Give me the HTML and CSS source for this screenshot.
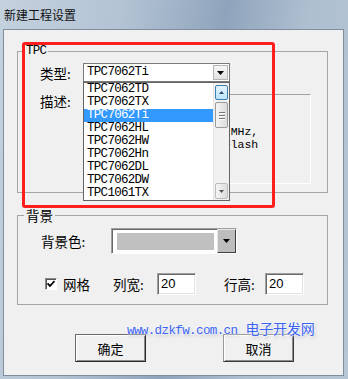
FILE: index.html
```html
<!DOCTYPE html>
<html lang="zh-CN">
<head>
    <meta charset="UTF-8">
    <meta name="viewport" content="width=device-width, initial-scale=1.0">
    <title>新建工程设置</title>
    <link rel="stylesheet" href="styles.css">
</head>
<body>
<div class="window">
    <div class="titlebar">新建工程设置</div>
    <div class="client">
        <fieldset class="group group-tpc">
            <legend class="mono">TPC</legend>
            <div class="row row-type">
                <span class="label">类型:</span>
                <div class="combo">
                    <span class="combo-text mono">TPC7062Ti</span>
                    <span class="combo-btn">
                        <svg width="7" height="4" viewBox="0 0 7 4"><path d="M0 0h7L3.5 4z" fill="#000"/></svg>
                    </span>
                    <div class="droplist">
                        <ul class="items mono">
                            <li>TPC7062TD</li>
                            <li>TPC7062TX</li>
                            <li class="selected">TPC7062Ti</li>
                            <li>TPC7062HL</li>
                            <li>TPC7062HW</li>
                            <li>TPC7062Hn</li>
                            <li>TPC7062DL</li>
                            <li>TPC7062DW</li>
                            <li>TPC1061TX</li>
                        </ul>
                        <div class="scrollbar">
                            <span class="sb-btn sb-up">
                                <svg width="5" height="3" viewBox="0 0 5 3"><path d="M0 3h5L2.5 0z" fill="#2c4a77"/></svg>
                            </span>
                            <span class="sb-thumb"><i></i><i></i><i></i></span>
                            <span class="sb-space"></span>
                            <span class="sb-btn sb-down">
                                <svg width="5" height="3" viewBox="0 0 5 3"><path d="M0 0h5L2.5 3z" fill="#555"/></svg>
                            </span>
                        </div>
                    </div>
                </div>
            </div>
            <div class="row row-desc">
                <span class="label">描述:</span>
                <div class="desc">
                    <div class="desc-line"></div>
                    <div class="desc-line"></div>
                    <div class="desc-line">&nbsp;MHz,</div>
                    <div class="desc-line">Flash</div>
                </div>
            </div>
        </fieldset>

        <fieldset class="group group-bg">
            <legend>背景</legend>
            <div class="row row-color">
                <span class="label label-color">背景色:</span>
                <div class="colorpick">
                    <span class="swatch"></span>
                    <span class="colorpick-btn">
                        <svg width="7" height="4" viewBox="0 0 7 4"><path d="M0 0h7L3.5 4z" fill="#000"/></svg>
                    </span>
                </div>
            </div>
            <div class="row row-grid">
                <span class="check">
                    <svg width="8" height="8" viewBox="0 0 8 8"><path d="M0.5 3.5L3 6L7.5 1" fill="none" stroke="#000" stroke-width="1.8"/></svg>
                </span>
                <span class="check-label">网格</span>
                <span class="label label-col">列宽:</span>
                <span class="edit">20</span>
                <span class="label label-rowh">行高:</span>
                <span class="edit">20</span>
            </div>
        </fieldset>

        <div class="buttons">
            <button class="btn btn-default">确定</button>
            <button class="btn">取消</button>
        </div>

        <div class="mark-box"></div>
        <div class="watermark"><span class="wm-url">www.dzkfw.com.cn</span> <span class="wm-name">电子开发网</span></div>
    </div>
</div>
</body>
</html>
```

FILE: styles.css
```css
* {
    box-sizing: border-box;
}
body {
    margin: 0;
    width: 348px;
    height: 379px;
    overflow: hidden;
    font-family: "Noto Sans CJK SC", sans-serif;
    font-size: 13.5px;
    color: #000;
    background: linear-gradient(100deg, #c4d1de 0%, #b3c3d4 30%, #8fa4bc 55%, #aebfd0 75%, #b7c6d5 100%);
}
.mono {
    font-family: "Liberation Mono", monospace;
    font-size: 12.5px;
    letter-spacing: -0.7px;
}
.titlebar {
    height: 29px;
    display: flex;
    align-items: center;
    padding-left: 4px;
    font-size: 12px;
    color: #111;
}
.client {
    position: relative;
    width: 341px;
    height: 347px;
    margin-left: 3px;
    padding-top: 14px;
    background: #f0f0f0;
    border: 1px solid #7f8e9e;
}

/* group boxes */
.group {
    width: 311px;
    margin: 0 0 0 13px;
    padding: 0 0 8px 0;
    min-inline-size: 0;
    border: 1px solid #a5a5a5;
}
.group legend {
    margin-left: 6px;
    padding: 0 2px;
    line-height: 14px;
}
.group-bg {
    margin-top: 15px;
    padding-bottom: 9px;
}
.row {
    display: flex;
    padding-left: 22px;
    white-space: nowrap;
}
.label {
    flex: none;
    width: 43px;
    line-height: 14px;
}

/* type combo */
.row-type {
    align-items: center;
    margin-top: 5px;
}
.combo {
    position: relative;
    display: flex;
    width: 147px;
    height: 19px;
    border: 1px solid #7a7a7a;
    background: #fff;
}
.combo-text {
    flex: 1;
    padding-left: 3px;
    line-height: 17px;
}
.combo-btn {
    width: 15px;
    margin: 1px;
    display: flex;
    align-items: center;
    justify-content: center;
    border: 1px solid #b4b4b4;
    background: linear-gradient(#f6f6f6, #e2e2e2);
}
.droplist {
    position: absolute;
    left: -1px;
    top: 18px;
    z-index: 2;
    display: flex;
    width: 147px;
    height: 119px;
    border: 1px solid #646464;
    background: #fff;
}
.items {
    flex: 1;
    list-style: none;
    margin: 0;
    padding: 0;
}
.items li {
    height: 13px;
    line-height: 13px;
    padding-left: 3px;
}
.items li.selected {
    background: #3399ff;
    color: #fff;
}
.scrollbar {
    width: 16px;
    display: flex;
    flex-direction: column;
    padding: 2px 1px 1px;
    background: #f1f1f1;
    border-left: 1px solid #e6e6e6;
}
.sb-btn {
    height: 15px;
    display: flex;
    align-items: center;
    justify-content: center;
    border-radius: 2px;
}
.sb-up {
    border: 1px solid #3c7fb1;
    background: linear-gradient(#e3f4fc, #bde3f8);
}
.sb-down {
    height: 16px;
    border: 1px solid #bcbcbc;
    background: linear-gradient(to right, #f5f5f5, #dcdcdc);
}
.sb-thumb {
    height: 26px;
    margin-top: 2px;
    display: flex;
    flex-direction: column;
    align-items: center;
    justify-content: center;
    gap: 2px;
    border: 1px solid #9a9a9a;
    border-radius: 2px;
    background: linear-gradient(to right, #f4f4f4, #dcdcdc);
}
.sb-thumb i {
    width: 6px;
    height: 1px;
    background: #777;
    box-shadow: 0 1px #fff;
}
.sb-space {
    flex: 1;
}

/* description (mostly hidden under the open list) */
.row-desc {
    align-items: flex-start;
    margin-top: 12px;
}
.desc {
    width: 228px;
    height: 90px;
    padding: 4px 0 0 140px;
    font-family: "Liberation Mono", monospace;
    font-size: 11.5px;
    letter-spacing: -0.1px;
    line-height: 13px;
    white-space: nowrap;
    overflow: hidden;
    border: 1px solid;
    border-color: #a0a0a0 #fff #fff #a0a0a0;
}
.desc-line {
    height: 13px;
}

/* background group */
.row-color {
    align-items: center;
    margin-top: 6px;
    padding-left: 23px;
}
.label-color {
    width: 70px;
}
.colorpick {
    display: flex;
    width: 126px;
    height: 26px;
    border: 1px solid;
    border-color: #a0a0a0 #fff #fff #a0a0a0;
    box-shadow: inset 1px 1px #696969;
    background: #fff;
}
.swatch {
    flex: 1;
    margin: 4px 3px 3px 5px;
    background: #c0c0c0;
}
.colorpick-btn {
    width: 19px;
    display: flex;
    align-items: center;
    justify-content: center;
    border: 1px solid;
    border-color: #e8e8e8 #404040 #404040 #e8e8e8;
    background: #bdbdbd;
}
.row-grid {
    align-items: center;
    margin-top: 19px;
    padding-left: 27px;
}
.check {
    flex: none;
    width: 12px;
    height: 12px;
    display: flex;
    align-items: center;
    justify-content: center;
    border: 1px solid;
    border-color: #8a8a8a #fff #fff #8a8a8a;
    box-shadow: inset 1px 1px #555;
    background: #fff;
}
.check-label {
    flex: none;
    width: 28px;
    margin-left: 6px;
}
.label-col {
    margin-left: 22px;
    width: 44px;
}
.label-rowh {
    margin-left: 28px;
    width: 41px;
}
.edit {
    flex: none;
    width: 39px;
    height: 22px;
    padding-left: 3px;
    line-height: 20px;
    font-family: "Liberation Sans", sans-serif;
    font-size: 13px;
    border: 1px solid;
    border-color: #a0a0a0 #fff #fff #a0a0a0;
    box-shadow: inset 1px 1px #696969, inset -1px -1px #e3e3e3;
    background: #fff;
}

/* buttons */
.buttons {
    display: flex;
    gap: 77px;
    margin-top: 29px;
    padding-left: 71px;
}
.btn {
    width: 71px;
    height: 28px;
    padding: 0;
    font-family: "Noto Sans CJK SC", sans-serif;
    font-size: 13px;
    color: #000;
    background: #f0f0f0;
    border: 1px solid;
    border-color: #9a9a9a #3a3a3a #3a3a3a #9a9a9a;
    box-shadow: inset 1px 1px #fff, inset -1px -1px #8c8c8c;
}
.btn-default {
    border-color: #6a6a6a #2a2a2a #2a2a2a #6a6a6a;
}

/* annotation overlays */
.mark-box {
    position: absolute;
    left: 18px;
    top: 12px;
    z-index: 3;
    width: 253px;
    height: 166px;
    border: 3px solid #ff1e1e;
    border-radius: 3px;
}
.watermark {
    position: absolute;
    left: 123px;
    top: 290px;
    z-index: 4;
    line-height: 16px;
    white-space: nowrap;
    color: #3c64f2;
    text-shadow: 0 0 2px #fff, 0 0 3px #fff, 1px 2px 3px rgba(140, 150, 180, 0.6);
}
.wm-url {
    font-family: "Liberation Mono", monospace;
    font-size: 12.5px;
    letter-spacing: -0.6px;
}
.wm-name {
    margin-left: 5px;
    font-size: 14px;
    letter-spacing: -0.2px;
}
```
